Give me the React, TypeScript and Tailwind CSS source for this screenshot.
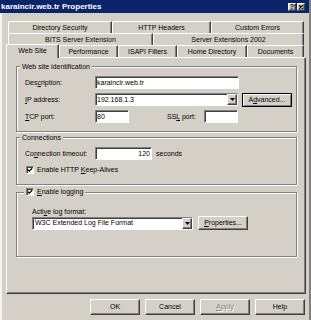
import React from "react";

const raised =
  "bg-[#d4d0c8] border border-t-white border-l-white border-r-[#404040] border-b-[#404040] shadow-[inset_-1px_-1px_0_#808080]";
const sunken =
  "bg-white border border-t-[#808080] border-l-[#808080] border-r-white border-b-white shadow-[inset_1px_1px_0_#404040]";
const etched =
  "relative border border-[#808080] shadow-[inset_1px_1px_0_#fff,1px_1px_0_#fff]";

const row1 = [
  { label: "Directory Security", w: "w-[104px]" },
  { label: "HTTP Headers", w: "w-[99px]" },
  { label: "Custom Errors", w: "w-[93px]" },
];
const row2 = [
  { label: "BITS Server Extension", w: "w-[145px]" },
  { label: "Server Extensions 2002", w: "w-[151px]" },
];
const row3 = [
  { label: "Performance", w: "w-[59px]" },
  { label: "ISAPI Filters", w: "w-[59px]" },
  { label: "Home Directory", w: "w-[70px]" },
  { label: "Documents", w: "w-[57px]" },
];

function Tab({ label, w }: { label: string; w: string }) {
  return (
    <div
      className={`${w} h-[12px] border-t border-l border-r border-t-white border-l-white border-r-[#404040] shadow-[inset_-1px_0_0_#808080] flex items-center justify-center`}
    >
      {label}
    </div>
  );
}

function Check() {
  return (
    <span className={`${sunken} w-[8px] h-[8px] flex items-center justify-center shrink-0`}>
      <svg width="6" height="6" viewBox="0 0 6 6">
        <path d="M0.8 2.6 L2.3 4.1 L5.2 1.2" stroke="#000" strokeWidth="1.3" fill="none" />
      </svg>
    </span>
  );
}

function Arrow() {
  return (
    <span className={`${raised} w-[10px] h-full flex items-center justify-center shrink-0`}>
      <svg width="5" height="3" viewBox="0 0 5 3">
        <path d="M0 0H5L2.5 3Z" fill="#000" />
      </svg>
    </span>
  );
}

function Btn({ children, cls = "" }: { children: React.ReactNode; cls?: string }) {
  return (
    <div className={`${raised} flex items-center justify-center ${cls}`}>{children}</div>
  );
}

export default function App() {
  return (
    <div className="w-[311px] h-[320px] bg-[#d4d0c8] flex flex-col font-['Liberation_Sans',Arial,sans-serif] text-[7px] leading-[8px] text-black border-r-2 border-r-[#808080] overflow-hidden">
      {/* title bar */}
      <div className="h-[13px] shrink-0 bg-[#0a246a] flex items-center pl-px pr-[4px]">
        <span className="text-white font-bold text-[8px] leading-[10px]">karaincir.web.tr Properties</span>
        <div className="ml-auto flex gap-px">
          <div className={`${raised} w-[8px] h-[8px] flex items-center justify-center font-bold text-[7px] leading-[7px]`}>
            ?
          </div>
          <div className={`${raised} w-[8px] h-[8px] flex items-center justify-center`}>
            <svg width="4" height="4" viewBox="0 0 4 4">
              <path d="M0 0L4 4M4 0L0 4" stroke="#000" strokeWidth="1.2" />
            </svg>
          </div>
        </div>
      </div>

      <div className="flex-1 border-l-2 border-l-[#f4f4f4] pt-[8px] flex flex-col">
        {/* tabs */}
        <div className="ml-[6px] flex">
          {row1.map((t) => (
            <Tab key={t.label} {...t} />
          ))}
        </div>
        <div className="ml-[6px] flex">
          {row2.map((t) => (
            <Tab key={t.label} {...t} />
          ))}
        </div>
        <div className="ml-[4px] h-[12px] flex items-end">
          <div className="relative z-10 w-[53px] h-[14px] -mb-px bg-[#d4d0c8] border-t border-l border-r border-t-white border-l-white border-r-[#404040] shadow-[inset_-1px_0_0_#808080] flex items-center justify-center pb-[1px]">
            Web Site
          </div>
          {row3.map((t) => (
            <Tab key={t.label} {...t} />
          ))}
        </div>

        {/* panel */}
        <div className={`${raised} ml-[4px] w-[300px] h-[237px] pt-[8px] pl-[9px] flex flex-col`}>
          {/* Web site identification */}
          <div className={`${etched} w-[281px] pt-[9px] pl-[8px] pb-[8px] flex flex-col gap-[4px]`}>
            <span className="absolute -top-[4px] left-[3px] px-[2px] bg-[#d4d0c8]">Web site identification</span>
            <div className="h-[13px] flex items-center">
              <span className="w-[70px]">
                Des<span className="underline">c</span>ription:
              </span>
              <div className={`${sunken} w-[144px] h-[13px] pl-[1px] flex items-center`}>karaincir.web.tr</div>
            </div>
            <div className="h-[13px] flex items-center">
              <span className="w-[70px]">
                <span className="underline">I</span>P address:
              </span>
              <div className={`${sunken} w-[143px] h-[13px] pl-[1px] flex items-center`}>
                <span className="flex-1">192.168.1.3</span>
                <Arrow />
              </div>
              <div className="ml-[4px] w-[50px] h-[14px] border border-black flex">
                <div className="flex-1 flex items-center justify-center bg-[#d4d0c8] shadow-[inset_1px_1px_0_#fff,inset_-1px_-1px_0_#808080]">
                  A<span className="underline">d</span>vanced...
                </div>
              </div>
            </div>
            <div className="h-[13px] flex items-center">
              <span className="w-[70px]">
                <span className="underline">T</span>CP port:
              </span>
              <div className={`${sunken} w-[34px] h-[13px] pl-[1px] flex items-center`}>80</div>
              <span className="ml-[38px] w-[37px]">
                SS<span className="underline">L</span> port:
              </span>
              <div className={`${sunken} w-[34px] h-[13px]`} />
            </div>
          </div>

          {/* Connections */}
          <div className={`${etched} mt-[5px] w-[281px] pt-[9px] pl-[8px] pb-[10px] flex flex-col`}>
            <span className="absolute -top-[4px] left-[3px] px-[2px] bg-[#d4d0c8]">Connections</span>
            <div className="h-[13px] flex items-center">
              <span className="w-[70px]">
                Co<span className="underline">n</span>nection timeout:
              </span>
              <div className={`${sunken} w-[57px] h-[13px] pr-[1px] flex items-center justify-end`}>120</div>
              <span className="ml-[4px]">seconds</span>
            </div>
            <div className="mt-[6px] h-[8px] flex items-center pl-px gap-[3px]">
              <Check />
              <span>
                Enable HTTP <span className="underline">K</span>eep-Alives
              </span>
            </div>
          </div>

          {/* Logging */}
          <div className={`${etched} mt-[7px] w-[281px] pt-[15px] pl-[15px] pb-[26px] flex flex-col`}>
            <div className="absolute -top-[5px] left-[7px] px-[2px] bg-[#d4d0c8] flex items-center gap-[3px] h-[8px]">
              <Check />
              <span>
                <span className="underline">E</span>nable logging
              </span>
            </div>
            <span className="h-[8px]">
              Acti<span className="underline">v</span>e log format:
            </span>
            <div className="h-[14px] flex items-center">
              <div className={`${sunken} w-[161px] h-[13px] pl-[2px] flex items-center`}>
                <span className="flex-1">W3C Extended Log File Format</span>
                <Arrow />
              </div>
              <Btn cls="ml-[5px] w-[50px] h-[14px]">
                <span>
                  <span className="underline">P</span>roperties...
                </span>
              </Btn>
            </div>
          </div>
        </div>

        {/* buttons */}
        <div className="mt-[5px] ml-[88px] flex gap-[5px]">
          <Btn cls="w-[50px] h-[16px]">OK</Btn>
          <Btn cls="w-[50px] h-[16px]">Cancel</Btn>
          <Btn cls="w-[50px] h-[16px] text-[#808080] [text-shadow:1px_1px_0_#fff]">
            <span>
              <span className="underline">A</span>pply
            </span>
          </Btn>
          <Btn cls="w-[50px] h-[16px]">Help</Btn>
        </div>
      </div>
    </div>
  );
}
